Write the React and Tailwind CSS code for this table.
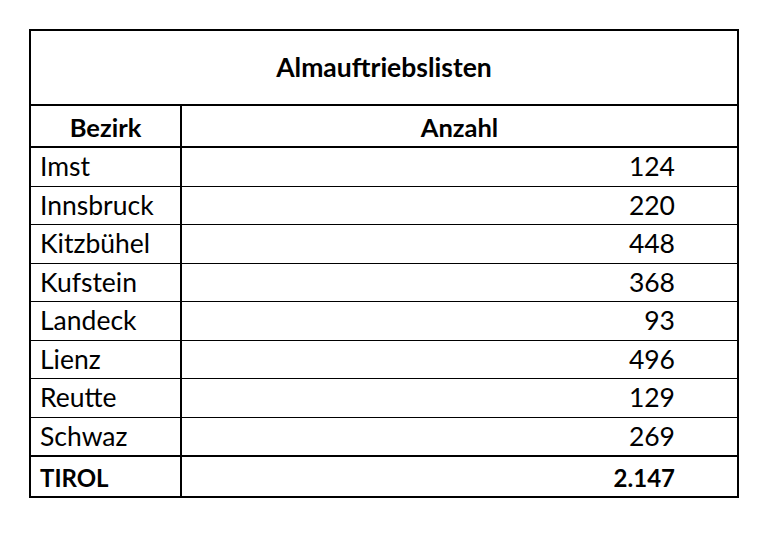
const rows = [
  ['Imst', '124'],
  ['Innsbruck', '220'],
  ['Kitzbühel', '448'],
  ['Kufstein', '368'],
  ['Landeck', '93'],
  ['Lienz', '496'],
  ['Reutte', '129'],
  ['Schwaz', '269'],
];

export default function App() {
  return (
    <div className="min-h-[558px] w-[771px] bg-white pl-[29px] pt-[29px] text-black" style={{ fontFamily: 'Lato, "Open Sans", sans-serif' }}>
      <div className="flex w-[710px] flex-col border-2 border-black">
        {/* title */}
        <div className="flex h-[75px] items-center justify-center border-b-2 border-black text-[26.5px] font-bold leading-none">
          Almauftriebslisten
        </div>

        {/* header */}
        <div className="flex h-[42px] border-b-2 border-black text-[25.5px] font-bold leading-none">
          <div className="flex w-[151px] items-end justify-center border-r-2 border-black pb-[6px]">Bezirk</div>
          <div className="flex flex-1 items-end justify-center pb-[6px]">Anzahl</div>
        </div>

        {/* data */}
        {rows.map(([name, n], i) => (
          <div
            key={name}
            className={
              'flex text-[26.5px] leading-none ' +
              (i < rows.length - 1 ? 'h-[38.5px] border-b border-black' : 'h-[37.5px]')
            }
          >
            <div className="flex w-[151px] items-end border-r-2 border-black pb-[6px] pl-[9px]">{name}</div>
            <div className="flex flex-1 items-end justify-end pb-[6px] pr-[62px]">{n}</div>
          </div>
        ))}

        {/* total */}
        <div className="flex h-[41px] border-t-2 border-black text-[24px] font-bold leading-none">
          <div className="flex w-[151px] items-end border-r-2 border-black pb-[6px] pl-[9px]">TIROL</div>
          <div className="flex flex-1 items-end justify-end pb-[6px] pr-[62px]">2.147</div>
        </div>
      </div>
    </div>
  );
}
